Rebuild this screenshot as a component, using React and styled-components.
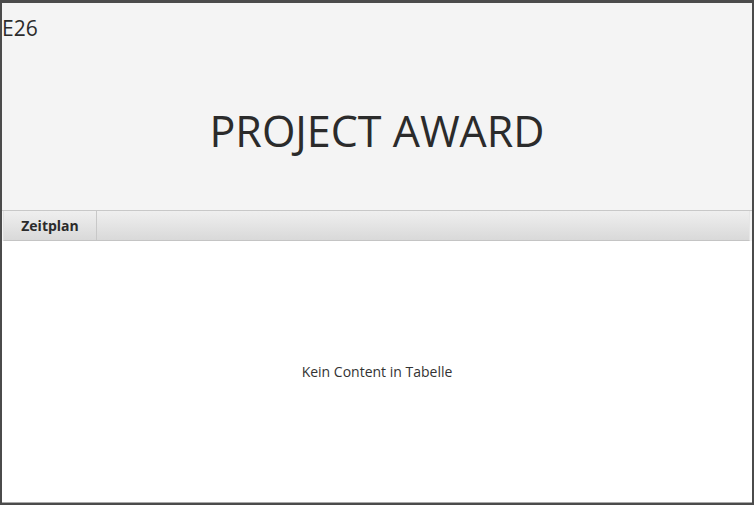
import React from 'react';
import styled, { createGlobalStyle } from 'styled-components';

const GlobalStyle = createGlobalStyle`
  html, body {
    margin: 0;
    padding: 0;
    background: #4b4b4b;
  }
  #root {
    width: 754px;
    height: 505px;
  }
`;

const Frame = styled.div`
  box-sizing: border-box;
  width: 754px;
  height: 505px;
  padding: 3px 2px 2px 2px;
  background: #4b4b4b;
  font-family: "Open Sans", "Noto Sans", sans-serif;
  color: #333;
`;

const Window = styled.div`
  height: 100%;
  display: flex;
  flex-direction: column;
  background: #f4f4f4;
  border-bottom: 1px solid #a8a8a8;
  box-sizing: border-box;
`;

const Header = styled.div`
  height: 207px;
  display: flex;
  flex-direction: column;
  border-bottom: 1px solid #c8c8c8;
`;

const Code = styled.div`
  font-size: 21px;
  line-height: 28px;
  padding: 11px 0 0 0;
  color: #2b2b2b;
`;

const Title = styled.div`
  flex: 1;
  display: flex;
  align-items: center;
  justify-content: center;
  font-size: 43px;
  font-weight: 400;
  color: #2b2b2b;
  padding-top: 9px;
`;

const TabBar = styled.div`
  display: flex;
  height: 29px;
  margin: 0 2px 0 1px;
  background: linear-gradient(#efefef, #d9d9d9);
  border-left: 1px solid #e0e0e0;
  border-right: 1px solid #e6e6e6;
  border-bottom: 1px solid #c4c4c4;
`;

const Tab = styled.div`
  width: 92px;
  display: flex;
  align-items: center;
  justify-content: center;
  font-size: 14px;
  font-weight: 700;
  color: #2b2b2b;
  border-right: 1px solid #c8c8c8;
`;

const Content = styled.div`
  flex: 1;
  background: #fff;
  display: flex;
  align-items: center;
  justify-content: center;
  font-size: 14px;
  color: #333;
  padding-bottom: 1px;
`;

export default function App() {
  return (
    <>
      <GlobalStyle />
      <Frame>
        <Window>
          <Header>
            <Code>E26</Code>
            <Title>PROJECT AWARD</Title>
          </Header>
          <TabBar>
            <Tab>Zeitplan</Tab>
          </TabBar>
          <Content>Kein Content in Tabelle</Content>
        </Window>
      </Frame>
    </>
  );
}
